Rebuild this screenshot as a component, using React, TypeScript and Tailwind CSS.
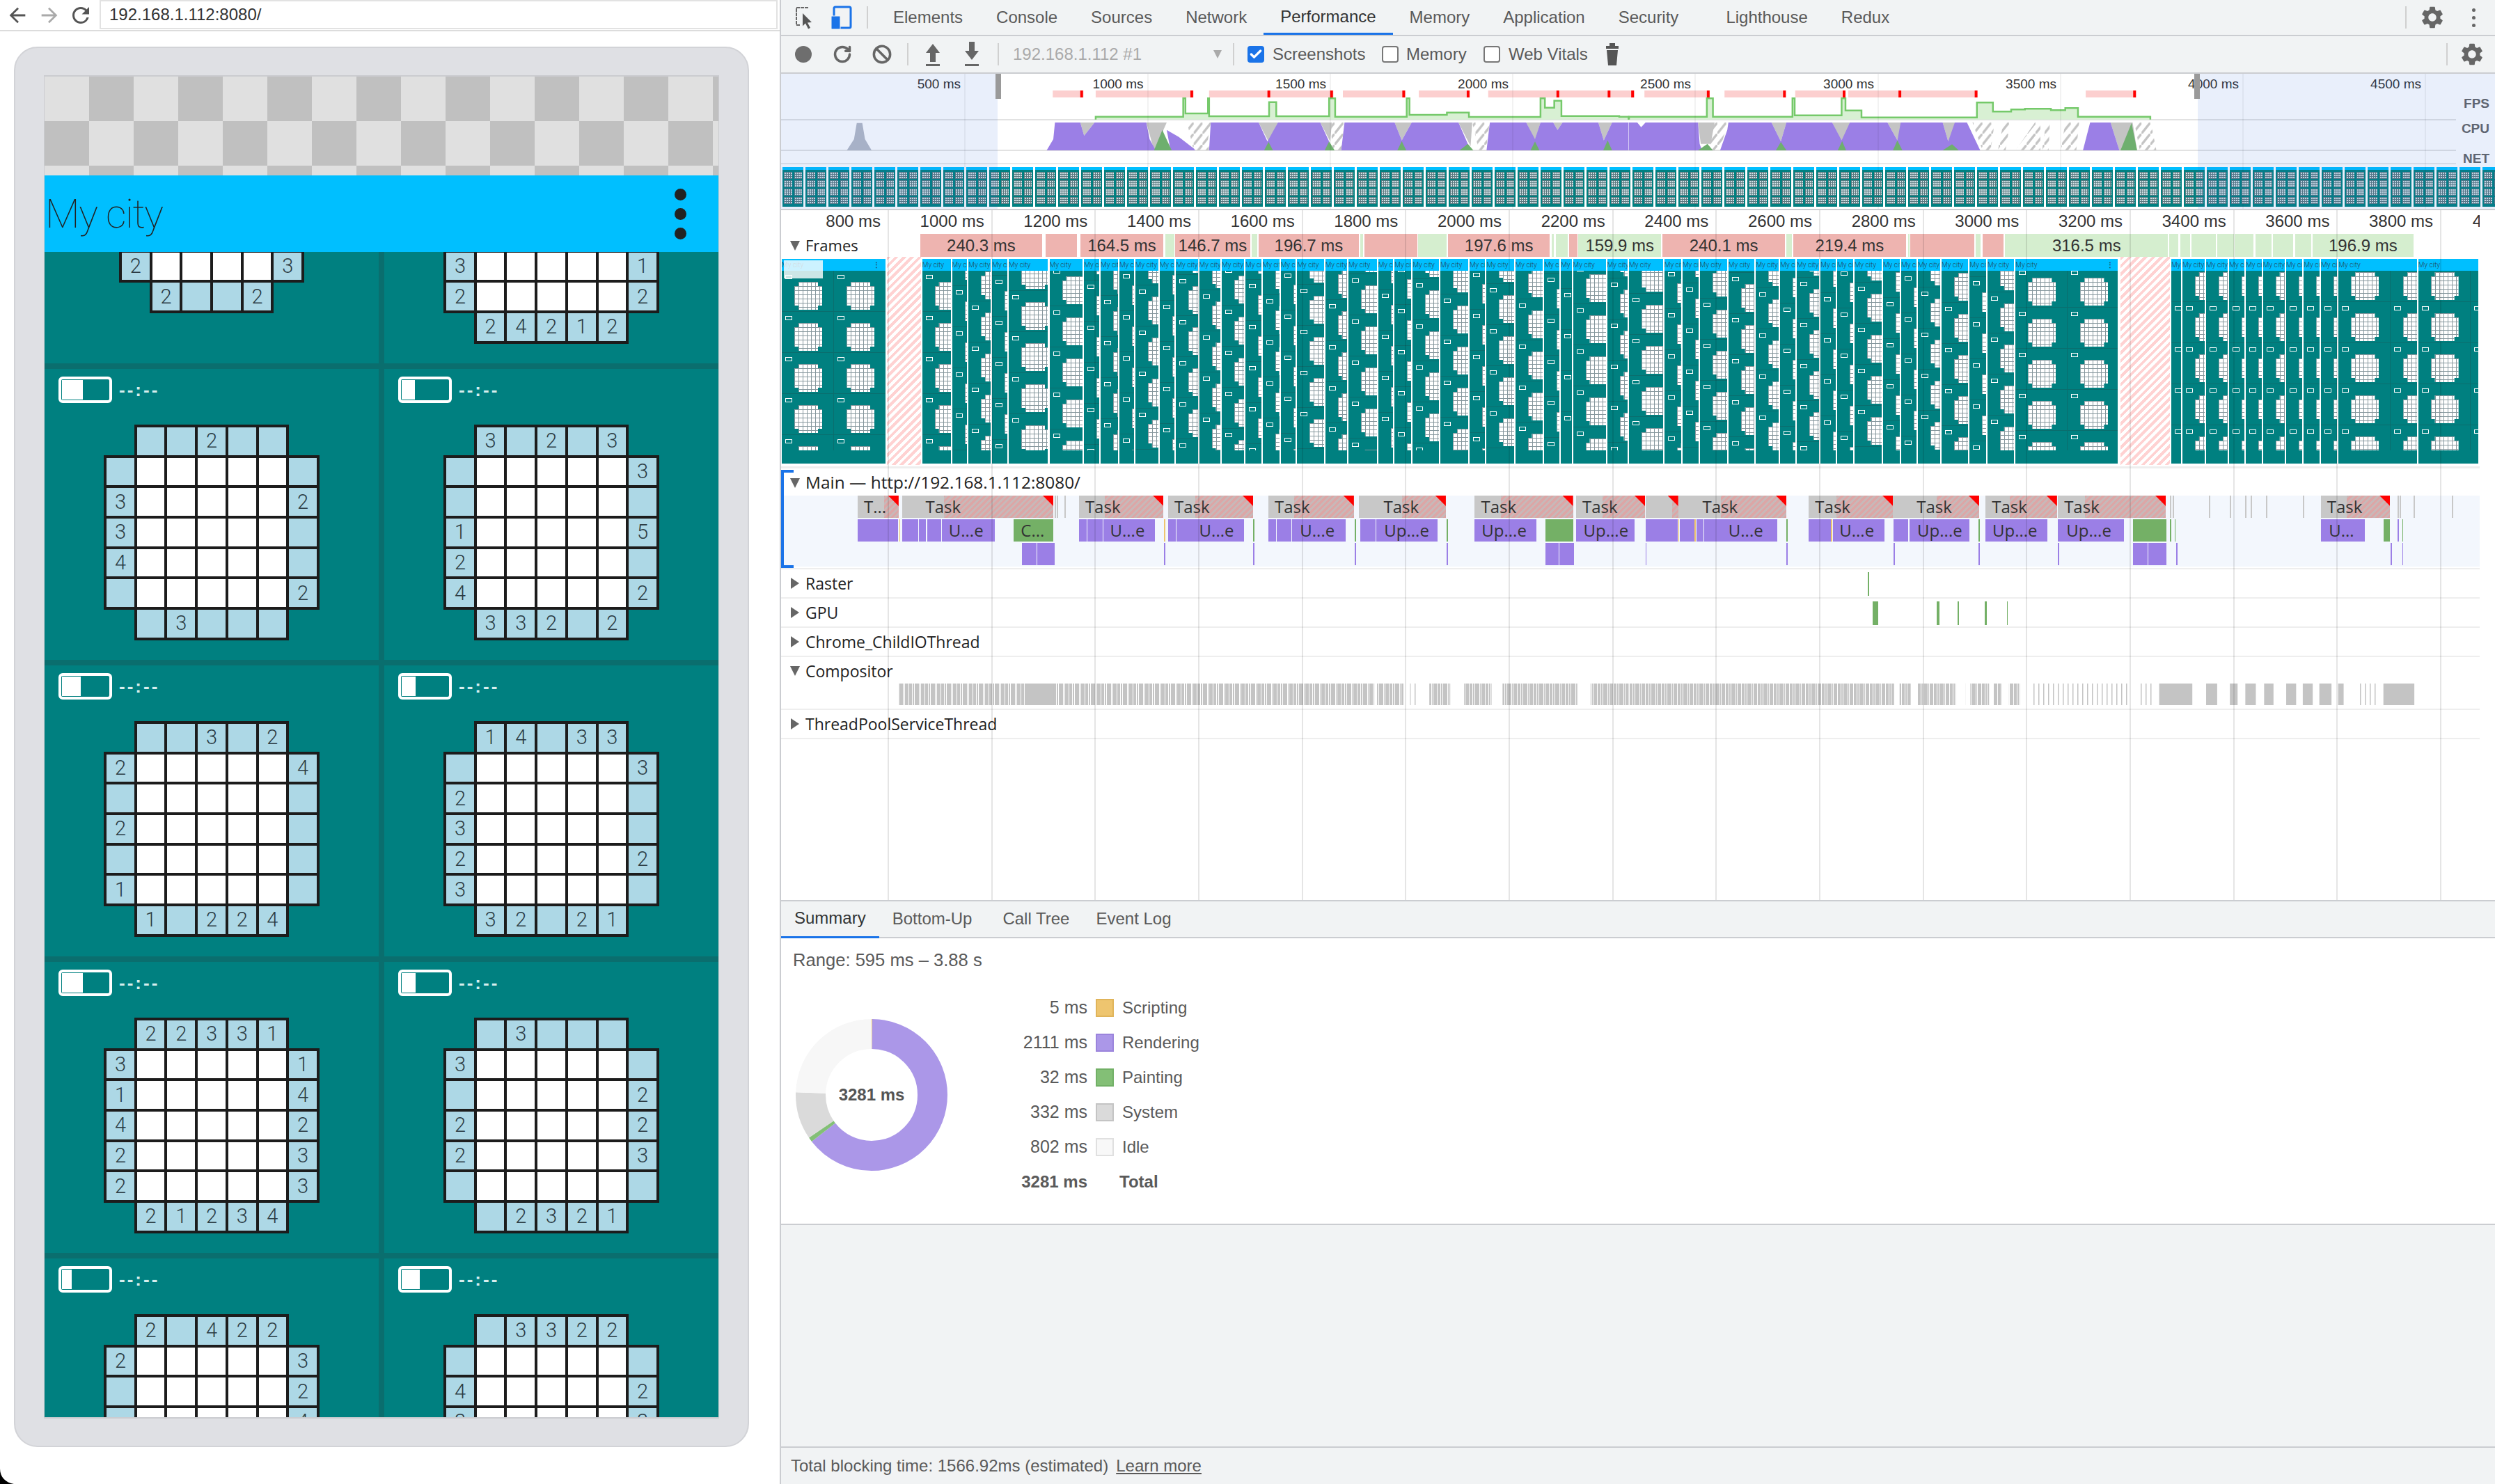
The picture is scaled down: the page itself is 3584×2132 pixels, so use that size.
import { Ban, Check, RotateCw } from "lucide-react"
import { MdArrowBack, MdArrowForward, MdRefresh, MdSettings } from "react-icons/md"

// zoomed coordinates of the timeline -> px from the left edge of the devtools pane
const a = (z: number) => z / 1.2645 - 2
const b = (z: number) => 1218 + z / 1.2605

/* ---------- puzzle board on the left ---------- */

const boards: { fill?: number; rows: string[] }[] = [
    { rows: [".1__2.", "_wwww_", "_wwww3", "1wwww_", "2wwww3", ".2__2."] },
    { rows: [".2___1.", "_wwwww_", "_wwwww2", "_wwwww1", "3wwwww1", "2wwwww2", ".24212."] },
    { fill: 30, rows: [".__2__.", "_wwwww_", "3wwwww2", "3wwwww_", "4wwwww_", "_wwwww2", "._3___."] },
    { fill: 19, rows: [".3_2_3.", "_wwwww3", "_wwwww_", "1wwwww5", "2wwwww_", "4wwwww2", ".332_2."] },
    { fill: 27, rows: [".__3_2.", "2wwwww4", "_wwwww_", "2wwwww_", "_wwwww_", "1wwwww_", ".1_224."] },
    { fill: 20, rows: [".14_33.", "_wwwww3", "2wwwww_", "3wwwww_", "2wwwww2", "3wwwww_", ".32_21."] },
    { fill: 30, rows: [".22331.", "3wwwww1", "1wwwww4", "4wwwww2", "2wwwww3", "2wwwww3", ".21234."] },
    { fill: 20, rows: ["._3___.", "3wwwww_", "_wwwww2", "2wwwww2", "2wwwww3", "_wwwww_", "._2321."] },
    { fill: 14, rows: [".2_422.", "2wwwww3", "_wwwww2", "_wwwww4", "_wwwww_", "_wwwww_", ".2_1_2."] },
    { fill: 26, rows: ["._3322.", "_wwwww_", "4wwwww2", "3wwwww3", "_wwwww_", "_wwwww_", "._12_2."] },
]

function Puzzle({ rows }: { rows: string[] }) {
    return (
        <div className={`mx-auto grid w-fit auto-rows-[43.7px] pb-1 pr-1 ${rows.length === 6 ? "grid-cols-[repeat(6,43.7px)]" : "grid-cols-[repeat(7,43.7px)]"}`}>
            {rows.join("").split("").map((c, i) =>
                c === "." ? (
                    <div key={i} />
                ) : (
                    <div
                        key={i}
                        className={`flex h-[47.7px] w-[47.7px] items-center justify-center border-4 border-[#1c1c1c] font-['Roboto',sans-serif] text-[29px] font-light leading-none text-[#2c3c44] ${c === "w" ? "bg-white" : "bg-[#add8e6]"}`}
                    >
                        {c !== "w" && c !== "_" ? c : ""}
                    </div>
                ),
            )}
        </div>
    )
}

function Card({ fill, rows }: { fill?: number; rows: string[] }) {
    return (
        <div className="h-[418px] bg-[#008080]">
            <div className="flex items-center pl-5 pt-[11px]">
                <div className="h-[38px] w-[77px] rounded-md border-4 border-white p-px">
                    <div className="h-full bg-white" style={{ width: fill ?? 20 }} />
                </div>
                <span className="ml-[10px] text-[26px] font-bold leading-none tracking-[3px] text-[#d7eeee]">--:--</span>
            </div>
            <div className="mt-[31px]">
                <Puzzle rows={rows} />
            </div>
        </div>
    )
}

function Phone() {
    return (
        <div className="relative h-[2132px] w-[1120px] shrink-0 bg-white">
            <div className="flex h-[45px] border-b-2 border-[#dcdcdc]">
                <div className="flex w-[143px] items-center pl-2">
                    <MdArrowBack size={34} className="text-[#555]" />
                    <MdArrowForward size={34} className="ml-[12px] text-[#aaa]" />
                    <MdRefresh size={36} className="ml-[10px] text-[#555]" />
                </div>
                <div className="flex h-[42px] w-[974px] items-center border-2 border-[#e2e2e2] pl-3 text-[24px] text-[#333]">192.168.1.112:8080/</div>
            </div>
            <div className="ml-5 mt-[22px] h-[2012px] w-[1056px] rounded-[34px] border-2 border-[#d2d3d7] bg-[#dfe0e4] pl-[41px] pt-[39px]">
                <div className="flex h-[1930px] w-[970px] flex-col border-x border-y-2 border-[#cbccd0]">
                    <div className="h-[142px] shrink-0 bg-[conic-gradient(#c0c0c0_25%,#e0e0e0_0_50%,#c0c0c0_0_75%,#e0e0e0_0)] [background-size:128px_128px]" />
                    <div className="flex h-[110px] shrink-0 items-center justify-between bg-[#00bfff] pl-px pr-[46px]">
                        <span className="font-['Roboto',sans-serif] text-[58px] font-thin leading-none tracking-tight text-[#222]">My city</span>
                        <div className="flex flex-col gap-[11px]">
                            <div className="h-[17px] w-[17px] rounded-full bg-[#222]" />
                            <div className="h-[17px] w-[17px] rounded-full bg-[#222]" />
                            <div className="h-[17px] w-[17px] rounded-full bg-[#222]" />
                        </div>
                    </div>
                    <div className="flex-1 overflow-hidden">
                        <div className="-mt-[258px] grid grid-cols-2 gap-2 bg-[#0a6e6e]">
                            {boards.map((c, i) => (
                                <Card key={i} fill={c.fill} rows={c.rows} />
                            ))}
                        </div>
                    </div>
                </div>
            </div>
            <svg width="20" height="22" className="absolute bottom-0 left-0">
                <path d="M0 0C0 12 8 20 20 22H0Z" fill="#000" />
            </svg>
        </div>
    )
}

/* ---------- small icons ---------- */

function Tri({ open }: { open?: boolean }) {
    return (
        <svg width="14" height="16" className="shrink-0">
            <polygon points={open ? "0,1 14,1 7,15" : "1,0 13,8 1,16"} fill="#666" />
        </svg>
    )
}

function Inspect() {
    return (
        <svg width="26" height="34" viewBox="0 0 26 34">
            <path d="M19 3H2v25h6" fill="none" stroke="#666" strokeWidth="2" strokeDasharray="5 1" />
            <path d="M11 11l13 13-6 .5 4 7.5-3 1.5-4-8-4 4z" fill="#555" />
        </svg>
    )
}

function Device() {
    return (
        <svg width="32" height="34" viewBox="0 0 32 34">
            <rect x="6" y="2" width="24" height="30" rx="2" fill="none" stroke="#1a73e8" strokeWidth="3" />
            <rect x="2" y="15" width="13" height="19" rx="1" fill="#1a73e8" stroke="#f1f3f4" strokeWidth="1" />
        </svg>
    )
}

function Arrow({ down }: { down?: boolean }) {
    return (
        <svg width="24" height="36" viewBox="0 0 24 36">
            <g transform={down ? "translate(0 -3)" : ""}>
                <path d={down ? "M8 3h8v13h6L12 29 2 16h6z" : "M12 3l10 13h-6v13H8V16H2z"} fill="#666" />
            </g>
            <rect x="2" y="32" width="20" height="3" fill="#666" />
        </svg>
    )
}

function Trash() {
    return (
        <svg width="30" height="36" viewBox="0 0 30 36">
            <rect x="6" y="6" width="18" height="4" fill="#555" />
            <rect x="11" y="2" width="8" height="4" fill="#555" />
            <path d="M7 12h16l-2 22H9z" fill="#555" />
        </svg>
    )
}

function Sep() {
    return <div className="h-8 w-0.5 bg-[#d0d0d0]" />
}

function CheckBox({ on }: { on?: boolean }) {
    return on ? (
        <div className="flex h-6 w-6 items-center justify-center rounded bg-[#1a73e8]">
            <Check size={20} strokeWidth={4} className="text-white" />
        </div>
    ) : (
        <div className="h-6 w-6 rounded border-2 border-[#777] bg-white" />
    )
}

/* ---------- devtools top bars ---------- */

const tabs = ["Elements", "Console", "Sources", "Network", "Performance", "Memory", "Application", "Security", "Lighthouse", "Redux"]

function TabBar() {
    return (
        <div className="flex h-[52px] items-center border-b-2 border-[#cbcdd1] bg-[#f1f3f4] text-[24px] text-[#5a5a5a]">
            <div className="ml-5">
                <Inspect />
            </div>
            <div className="ml-6">
                <Device />
            </div>
            <div className="ml-[21px]">
                <Sep />
            </div>
            <div className="ml-3 flex h-full">
                {tabs.map((t) => (
                    <div
                        key={t}
                        className={`flex h-[50px] items-center px-6 ${t === "Performance" ? "border-b-[3px] border-[#1a73e8] text-[#333]" : ""} ${t === "Security" ? "mr-5" : ""}`}
                    >
                        {t}
                    </div>
                ))}
            </div>
            <div className="ml-auto">
                <Sep />
            </div>
            <MdSettings size={38} className="ml-[18px] text-[#666]" />
            <div className="ml-[38px] mr-[28px] flex flex-col gap-[6px]">
                <div className="h-[5px] w-[5px] rounded-full bg-[#666]" />
                <div className="h-[5px] w-[5px] rounded-full bg-[#666]" />
                <div className="h-[5px] w-[5px] rounded-full bg-[#666]" />
            </div>
        </div>
    )
}

function Toolbar() {
    return (
        <div className="flex h-[54px] items-center border-b-2 border-[#cbcdd1] bg-[#f1f3f4] pl-5 pr-[14px] text-[24px] text-[#5a5a5a]">
            <div className="h-6 w-6 rounded-full bg-[#6e6e6e]" />
            <RotateCw size={28} strokeWidth={3} className="ml-[30px] text-[#666]" />
            <Ban size={28} strokeWidth={3} className="ml-[29px] text-[#666]" />
            <div className="ml-[22px]">
                <Sep />
            </div>
            <div className="ml-[23px]">
                <Arrow />
            </div>
            <div className="ml-8">
                <Arrow down />
            </div>
            <div className="ml-[25px]">
                <Sep />
            </div>
            <span className="ml-5 w-[288px] text-[#aaa]">192.168.1.112 #1</span>
            <svg width="12" height="12">
                <polygon points="0,0 12,0 6,12" fill="#aaa" />
            </svg>
            <div className="ml-4">
                <Sep />
            </div>
            <div className="ml-[19px]">
                <CheckBox on />
            </div>
            <span className="ml-3 w-[157px]">Screenshots</span>
            <CheckBox />
            <span className="ml-[11px] w-[111px]">Memory</span>
            <CheckBox />
            <span className="ml-3 w-[134px]">Web Vitals</span>
            <Trash />
            <div className="ml-auto">
                <Sep />
            </div>
            <MdSettings size={38} className="ml-4 text-[#666]" />
        </div>
    )
}

/* ---------- overview ---------- */

const ovTicks = [1385, 1647.5, 1910, 2172, 2434, 2697, 2959, 3221, 3483]

const fpsBarsA = [[496, 552, 548], [574, 752, 748], [780, 1006, 888, 1002], [1023, 1137, 1133], [1161, 1254, 1250], [1287, 1542, 1413, 1506]]
const fpsBarsB = [[-10, 10, 6], [28, 146, 143], [173, 284, 281], [301, 392, 389], [397, 631, 490, 628], [827, 918, 915]]

const fpsLineA = "574,515 574,503 733,503 733,424 737,424 737,489 778,489 778,424 780,424 780,501 889,501 889,440 902,440 902,501 998,501 998,424 1009,424 1009,503 1139,503 1139,424 1144,424 1144,495 1212,495 1212,485 1252,485 1252,504 1382,504 1382,424 1390,424 1390,464 1407,464 1407,434 1420,434 1420,500 1525,500 1525,503 1542,503 1542,515"
const fpsLineB = "0,515 0,503 141,503 141,424 152,424 152,503 296,503 296,424 300,424 300,497 385,497 385,424 392,424 392,476 421,476 421,506 630,506 630,442 659,442 659,481 692,481 692,472 717,472 717,469 764,469 764,475 790,475 790,466 813,466 813,503 944,503 944,515"

const cpuA: [string, string][] = [
    ["#c4c4c4", "546,528 572,528 553,585"],
    ["#c4c4c4", "666,528 703,528 697,560 690,648 680,648"],
    ["url(#hatch)", "740,528 783,528 778,600 780,648 752,648"],
    ["url(#hatch)", "1000,528 1028,528 1022,600 1020,648 1005,648"],
    ["url(#hatch)", "1258,528 1290,528 1285,600 1285,648 1270,648"],
    ["#9b7fe6", "485,648 497,600 500,528 546,528 553,585 572,528 666,528 672,600 683,648"],
    ["#9b7fe6", "703,560 725,590 752,640 755,648 710,648"],
    ["#c4c4c4", "870,528 905,528 888,610"],
    ["#c4c4c4", "982,528 1003,528 1000,610"],
    ["#c4c4c4", "1117,528 1148,528 1130,605"],
    ["#c4c4c4", "1233,528 1258,528 1255,630"],
    ["#c4c4c4", "1356,528 1382,528 1372,605"],
    ["#c4c4c4", "1405,528 1422,528 1413,560"],
    ["#c4c4c4", "1487,528 1512,528 1497,605"],
    ["#9b7fe6", "783,528 870,528 886,610 893,580 905,528 982,528 998,610 1003,648 780,648"],
    ["#9b7fe6", "1026,528 1117,528 1130,605 1148,528 1233,528 1250,620 1258,648 1020,648"],
    ["#9b7fe6", "1284,648 1290,528 1356,528 1372,600 1382,528 1405,528 1413,560 1422,528 1487,528 1497,605 1512,528 1542,528 1542,648"],
    ["#6eaf6e", "680,648 695,560 712,648"],
    ["#6eaf6e", "880,648 888,612 896,648"],
    ["#6eaf6e", "990,648 998,610 1008,648"],
    ["#6eaf6e", "1122,648 1130,608 1138,648"],
    ["#6eaf6e", "1235,648 1250,620 1260,648"],
    ["#6eaf6e", "1364,648 1372,610 1380,648"],
    ["#6eaf6e", "1496,648 1504,605 1512,648"],
    ["#b6bac6", "122,648 135,600 140,530 150,530 155,600 167,648"],
]

const cpuB: [string, string][] = [
    ["#c4c4c4", "125,528 155,528 148,620 130,620"],
    ["url(#hatch)", "137,528 180,528 170,600 165,648 150,648"],
    ["url(#hatch)", "622,528 662,528 655,648 640,648"],
    ["url(#hatch)", "678,528 690,528 682,648 668,648"],
    ["url(#hatch)", "735,528 745,528 745,648 700,648"],
    ["url(#hatch)", "755,528 762,528 760,648 748,648"],
    ["url(#hatch)", "790,528 815,528 810,648 782,648"],
    ["url(#hatch)", "915,528 945,528 955,648 925,648"],
    ["#c4c4c4", "258,528 285,528 275,610"],
    ["#c4c4c4", "368,528 403,528 392,600 385,610"],
    ["#c4c4c4", "468,528 495,528 486,605"],
    ["#c4c4c4", "568,528 595,528 578,610"],
    ["#c4c4c4", "872,528 912,528 920,648 888,648"],
    ["#9b7fe6", "0,648 0,528 15,528 22,548 30,528 125,528 128,620 132,648"],
    ["#9b7fe6", "165,648 178,560 180,528 258,528 275,610 285,528 368,528 385,605 400,528 468,528 486,605 492,528 568,528 578,610 590,528 612,528 636,648"],
    ["#9b7fe6", "822,648 835,528 872,528 888,648"],
    ["#6eaf6e", "125,648 142,620 152,648"],
    ["#6eaf6e", "266,648 275,612 285,648"],
    ["#6eaf6e", "378,648 386,608 393,648"],
    ["#6eaf6e", "478,648 486,605 495,648"],
    ["#6eaf6e", "568,648 585,622 597,648"],
    ["#6eaf6e", "890,648 910,530 920,648"],
]

function FpsBars({ list }: { list: number[][] }) {
    return (
        <>
            {list.map((bar, i) => (
                <g key={i}>
                    <rect x={bar[0]} y={390} width={bar[1] - bar[0]} height={30} fill="#fccfcf" />
                    {bar.slice(2).map((r) => (
                        <rect key={r} x={r - 2} y={390} width={5} height={30} fill="#f00" />
                    ))}
                </g>
            ))}
        </>
    )
}

function CpuShapes({ line, list }: { line: string; list: [string, string][] }) {
    return (
        <>
            {list.map(([fill, pts], i) => (
                <polygon key={i} points={pts} fill={fill} />
            ))}
            <polygon points={line} fill="#d8f0d3" />
            <polyline points={line} fill="none" stroke="#75c96a" strokeWidth="2.5" vectorEffect="non-scaling-stroke" />
        </>
    )
}

function StripFrame() {
    return (
        <div className="h-[57px] w-[30px] shrink-0 bg-[#008080]">
            <div className="h-1 bg-[#00bfff]" />
            <div className="grid grid-cols-2 gap-x-[3px] gap-y-[2px] px-[2px] pt-[3px]">
                {[0, 1, 2, 3, 4, 5, 6, 7].map((i) => (
                    <div key={i} className="h-[10px] bg-[#cfe0e4] bg-[linear-gradient(#5d7a80_1px,transparent_1px),linear-gradient(90deg,#5d7a80_1px,transparent_1px)] [background-size:3px_3px]" />
                ))}
            </div>
        </div>
    )
}

function Overview() {
    return (
        <div className="relative h-[196px] overflow-hidden border-b-2 border-[#cbcdd1] bg-white">
            <div className="relative h-[134px]">
                <svg width="2462" height="134" className="absolute left-0 top-0">
                    <defs>
                        <pattern id="hatch" width="16" height="48" patternUnits="userSpaceOnUse">
                            <line x1="0" y1="48" x2="16" y2="0" stroke="#c4c4c4" strokeWidth="5" vectorEffect="non-scaling-stroke" />
                        </pattern>
                    </defs>
                    <rect x="0" y="65" width="2406" height="2" fill="#e2e2e2" />
                    <rect x="0" y="109" width="2406" height="2" fill="#e2e2e2" />
                    <rect x="0" y="128" width="2406" height="2" fill="#e8e8e8" />
                    <g transform="translate(-2 -106) scale(0.7908 0.33333)">
                        <FpsBars list={fpsBarsA} />
                        <CpuShapes line={fpsLineA} list={cpuA} />
                    </g>
                    <g transform="translate(1218 -106) scale(0.7933 0.33333)">
                        <FpsBars list={fpsBarsB} />
                        <CpuShapes line={fpsLineB} list={cpuB} />
                    </g>
                </svg>
                {ovTicks.map((x, i) => (
                    <span key={x} className="absolute top-[3px] text-[19px] leading-6 text-[#333]" style={{ right: 2462 - (x - 1122) + 5 }}>
                        {500 + i * 500} ms
                    </span>
                ))}
                <span className="absolute right-2 top-[31px] text-[19px] font-bold leading-6 text-[#666]">FPS</span>
                <span className="absolute right-2 top-[67px] text-[19px] font-bold leading-6 text-[#666]">CPU</span>
                <span className="absolute right-2 top-[110px] text-[19px] font-bold leading-6 text-[#666]">NET</span>
            </div>
            <div className="flex gap-[3px] pl-[2px]">
                {Array.from({ length: 75 }, (_, i) => (
                    <StripFrame key={i} />
                ))}
            </div>
            {ovTicks.map((x) => (
                <div key={x} className="absolute inset-y-0 w-0.5 bg-black/5" style={{ left: x - 1122 }} />
            ))}
            <div className="absolute inset-y-0 left-0 w-[311px] bg-[#2a5fd8]/10" />
            <div className="absolute inset-y-0 left-[2035px] right-0 bg-[#2a5fd8]/10" />
            <div className="absolute left-[308px] top-0 h-9 w-2 bg-[#9a9a9a]" />
            <div className="absolute left-[2030px] top-0 h-9 w-2 bg-[#9a9a9a]" />
        </div>
    )
}

/* ---------- main timeline ---------- */

type Frame = [number, number, "p" | "g", string?]

const frameBars: Frame[] = [
    [a(255), a(477), "p", "240.3 ms"], [a(483), a(540), "p"], [a(546), a(697), "p", "164.5 ms"], [a(701), a(717), "g"],
    [a(718), a(855), "p", "146.7 ms"], [a(857), a(868), "g"], [a(870), a(1052), "p", "196.7 ms"], [a(1054), a(1060), "g"],
    [a(1062), a(1158), "p"], [a(1160), a(1211), "g"], [a(1214), a(1399), "p", "197.6 ms"], [a(1402), a(1406), "g"],
    [a(1410), a(1431), "g"], [a(1434), a(1449), "p"], [a(1451), b(58), "g", "159.9 ms"],
    [b(61), b(282), "p", "240.1 ms"], [b(285), b(295), "g"], [b(297), b(502), "p", "219.4 ms"], [b(505), b(508), "g"],
    [b(509), b(625), "p"], [b(628), b(637), "g"], [b(640), b(678), "p"], [b(681), b(976), "g", "316.5 ms"],
    [b(978), b(995), "g"], [b(998), b(1016), "g"], [b(1018), b(1062), "g"], [b(1065), b(1095), "g"], [b(1097), b(1131), "g"],
    [b(1134), b(1163), "g"], [b(1166), b(1203), "g"], [b(1206), b(1235), "g"], [b(1238), b(1420), "g", "196.9 ms"],
]

const shotEdges = [
    ...[259, 313, 343, 386, 416, 490, 553, 583, 617, 646, 690, 720, 762, 803, 846, 877, 910, 940, 991, 1033, 1087, 1117, 1150, 1200, 1253, 1284, 1336, 1389, 1419, 1441, 1503].map(a),
    ...[0, 64, 97, 128, 180, 230, 274, 304, 347, 377, 408, 460, 493, 523, 566, 617, 649, 700, 888].map(b),
]
const shotEdges2 = [982, 1002, 1045, 1087, 1117, 1148, 1190, 1222, 1253, 1285, 1429, 1540].map(b)

function MiniCard() {
    return (
        <div className="h-[59px] w-[75px] border-b border-r border-[#0a6e6e] pl-[5px] pt-[6px]">
            <div className="h-[6px] w-[10px] border border-white" />
            <div className="ml-[13px] mt-[4px] h-[40px] w-[40px] bg-white bg-[linear-gradient(#86979d_1px,transparent_1px),linear-gradient(90deg,#86979d_1px,transparent_1px)] [background-size:6px_6px] [clip-path:polygon(15%_0,85%_0,85%_15%,100%_15%,100%_85%,85%_85%,85%_100%,15%_100%,15%_85%,0_85%,0_15%,15%_15%)]" />
        </div>
    )
}

function Shot({ left, width, scroll }: { left: number; width: number; scroll: number }) {
    const double = width >= 75
    return (
        <div className="absolute bottom-[2px] top-[3px] overflow-hidden bg-[#008080]" style={{ left, width }}>
            <div className="flex h-[17px] w-[149px] items-center justify-between bg-[#00bfff] pr-2 font-['Roboto',sans-serif] text-[10px] font-light text-[#245]">
                <span>My city</span>
                {width > 140 && <span className="font-bold">⋮</span>}
            </div>
            <div className="h-[258px] w-[150px] overflow-hidden">
                <div className="flex flex-wrap" style={{ marginTop: -scroll }}>
                    {Array.from({ length: double ? 12 : 7 }, (_, i) => (
                        <div key={i} className={double ? "" : "w-[150px]"}>
                            <MiniCard />
                        </div>
                    ))}
                </div>
            </div>
        </div>
    )
}

function Shots() {
    return (
        <div className="relative h-[299px] bg-white">
            <Shot left={1} width={149} scroll={0} />
            <div className="absolute left-[4px] top-[5px] h-[26px] w-[56px] bg-white/80" />
            <div className="absolute inset-y-0 left-[152px] w-[49px] bg-[repeating-linear-gradient(135deg,#ffd2d2_0_4px,#fff_4px_8px)]" />
            <div className="absolute inset-y-0 w-[71px] bg-[repeating-linear-gradient(135deg,#ffd2d2_0_4px,#fff_4px_8px)]" style={{ left: b(890) }} />
            {shotEdges.slice(0, -1).map((x, i) => (
                <Shot key={i} left={x} width={shotEdges[i + 1] - x - 2} scroll={(i * 37) % 59} />
            ))}
            {shotEdges2.slice(0, -1).map((x, i) => (
                <Shot key={i} left={x} width={shotEdges2[i + 1] - x - 2} scroll={14} />
            ))}
        </div>
    )
}

// start, end, where the long-task hatching begins, where the label starts
const tasks: [number, number, number, number | null, string?][] = [
    [a(142), a(216), a(190), a(153), "T..."], [a(222), a(497), a(298), a(265), "Task"], [a(544), a(697), a(590), a(555), "Task"],
    [a(706), a(860), a(755), a(717), "Task"], [a(888), a(1043), a(935), a(899), "Task"], [a(1052), a(1210), a(1130), a(1097), "Task"],
    [a(1262), a(1441), a(1310), a(1274), "Task"], [a(1447), b(29), a(1495), a(1458), "Task"], [b(30), b(89), b(78), null],
    [b(90), b(285), b(167), b(133), "Task"], [b(325), b(478), b(375), b(337), "Task"], [b(478), b(634), b(557), b(521), "Task"],
    [b(645), b(775), b(690), b(657), "Task"], [b(776), b(972), b(825), b(788), "Task"], [b(1253), b(1378), b(1300), b(1264), "Task"],
]

const taskSlivers = [a(500), a(503), a(517), b(980), b(984), b(1050), b(1088), b(1115), b(1125), b(1153), b(1220), b(1392), b(1396), b(1420), b(1490)]

// start, end, colour, optional label and its x
type Block = [number, number, string, string?, number?]
const P = "bg-[#9b7fe6]"
const G = "bg-[#74b066]"
const Y = "bg-[#eec56f]"

const updates: Block[] = [
    [a(142), a(179), P], [a(180), a(215), P], [a(217), a(219), Y], [a(223), a(252), P], [a(253), a(265), P], [a(268), a(293), P], [a(294), a(391), P, "U...e", a(307)],
    [a(425), a(497), G, "C...", a(438)],
    [a(544), a(558), P], [a(559), a(587), P], [a(588), a(682), P, "U...e", a(600)], [a(698), a(700), Y],
    [a(706), a(720), P], [a(721), a(748), P], [a(749), a(843), P, "U...e", a(762)], [a(860), a(862), G],
    [a(888), a(902), P], [a(903), a(930), P], [a(931), a(1028), P, "U...e", a(945)], [a(1045), a(1047), G],
    [a(1055), a(1082), P], [a(1084), a(1195), P, "Up...e", a(1098)], [a(1212), a(1214), G],
    [a(1262), a(1375), P, "Up...e", a(1275)], [a(1391), a(1441), G], [a(1447), a(1553), P, "Up...e", a(1460)],
    [b(30), b(60), P], [b(61), b(88), P], [b(89), b(91), Y], [b(92), b(118), P], [b(119), b(121), Y], [b(122), b(135), P], [b(136), b(268), P, "U...e", b(180)], [b(285), b(287), G],
    [b(325), b(365), P], [b(366), b(368), Y], [b(369), b(463), P, "U...e", b(381)],
    [b(479), b(506), P], [b(508), b(617), P, "Up...e", b(522)], [b(633), b(635), G],
    [b(645), b(758), P, "Up...e", b(658)], [b(777), b(896), P, "Up...e", b(792)], [b(913), b(973), G], [b(980), b(982), G], [b(988), b(990), G],
    [b(1253), b(1332), P, "U...", b(1267)], [b(1366), b(1378), G], [b(1392), b(1394), P], [b(1400), b(1402), G],
]

const subUpdates: Block[] = [
    [a(440), a(467), P], [a(468), a(499), P], [a(698), a(700), P], [a(860), a(862), P], [a(1045), a(1047), P], [a(1212), a(1214), P],
    [a(1391), a(1415), P], [a(1416), a(1443), P], [b(30), b(32), P], [b(285), b(287), P], [b(479), b(481), P], [b(633), b(635), P],
    [b(777), b(779), P], [b(913), b(939), P], [b(940), b(973), P], [b(991), b(993), P], [b(1379), b(1381), P], [b(1400), b(1402), P],
]

function BlockRow({ list, top }: { list: Block[]; top: string }) {
    return (
        <>
            {list.map(([x0, x1, color, label, lx], i) => (
                <div key={i} className={`absolute h-8 ${top} ${color} overflow-hidden text-[24px] leading-8 text-[#333]`} style={{ left: x0, width: x1 - x0 }}>
                    {label && (
                        <span className="absolute top-0" style={{ left: (lx ?? x0) - x0 }}>
                            {label}
                        </span>
                    )}
                </div>
            ))}
        </>
    )
}

function Main() {
    return (
        <div className="relative h-[143px] border-b-2 border-[#eee] font-['Open_Sans',sans-serif]">
            <div className="flex h-[37px] items-center gap-2 pl-[13px] text-[24.4px] text-[#222]">
                <Tri open />
                <span>Main — http://192.168.1.112:8080/</span>
            </div>
            <div className="relative h-[102px] bg-[#f3f7fd]">
                {tasks.map(([x0, x1, h, lx, label], i) => (
                    <div key={i} className="absolute top-0 h-8 overflow-hidden bg-[#c8c8c8] text-[24px] leading-8 text-[#333]" style={{ left: x0, width: x1 - x0 }}>
                        <div className="absolute inset-y-0 right-0 bg-[repeating-linear-gradient(-45deg,#dca6a6_0_3px,#c8b8b8_3px_6px)]" style={{ width: x1 - h }} />
                        {label && lx !== null && (
                            <span className="absolute top-0" style={{ left: lx - x0 }}>
                                {label}
                            </span>
                        )}
                        <div className="absolute right-0 top-0 h-[15px] w-[15px] bg-[#f00] [clip-path:polygon(0_0,100%_0,100%_100%)]" />
                    </div>
                ))}
                {taskSlivers.map((x) => (
                    <div key={x} className="absolute top-0 h-8 w-0.5 bg-[#c8c8c8]" style={{ left: x }} />
                ))}
                <BlockRow list={updates} top="top-[34px]" />
                <BlockRow list={subUpdates} top="top-[68px]" />
            </div>
            <div className="absolute bottom-0 left-0 top-0 w-1 bg-[#1a73e8]" />
            <div className="absolute left-0 top-0 h-1 w-[18px] bg-[#1a73e8]" />
            <div className="absolute bottom-0 left-0 h-1 w-[18px] bg-[#1a73e8]" />
        </div>
    )
}

function Track({ name, open, tall, children }: { name: string; open?: boolean; tall?: boolean; children?: React.ReactNode }) {
    return (
        <div className={`relative border-b-2 border-[#eee] ${tall ? "h-[76px]" : "h-[42px]"}`}>
            <div className="flex h-10 items-center gap-2 pl-[13px] font-['Open_Sans',sans-serif] text-[23px] text-[#222]">
                <Tri open={open} />
                <span>{name}</span>
            </div>
            {children}
        </div>
    )
}

const compDense: [number, number][] = [
    [a(217), a(1080)], [a(1085), a(1133)], [a(1180), a(1218)], [a(1243), a(1293)], [a(1313), a(1450)], [a(1473), a(1542)],
    [b(0), b(480)], [b(490), b(510)], [b(522), b(592)], [b(618), b(652)], [b(660), b(675)], [b(688), b(708)],
]
const compSparse: [number, number][] = [[a(140), a(143)], [a(1145), a(1158)], [b(727), b(905)], [b(925), b(950)], [b(1318), b(1358)], [b(1488), b(1491)], [b(607), b(609)]]
const compSolid: [number, number][] = [[a(445), a(498)], [b(960), b(1020)], [b(1045), b(1065)], [b(1088), b(1102)], [b(1116), b(1135)], [b(1150), b(1167)], [b(1190), b(1208)], [b(1220), b(1238)], [b(1250), b(1272)], [b(1284), b(1294)], [b(1366), b(1422)]]

function CompositorBars() {
    return (
        <svg width="2440" height="31" className="absolute left-0 top-[38px]">
            <defs>
                <pattern id="dense" width="23" height="31" patternUnits="userSpaceOnUse">
                    <rect width="4" height="31" fill="#c4c4c4" />
                    <rect x="5" width="2" height="31" fill="#c4c4c4" />
                    <rect x="8" width="6" height="31" fill="#c4c4c4" />
                    <rect x="15" width="1" height="31" fill="#c4c4c4" />
                    <rect x="17" width="5" height="31" fill="#c4c4c4" />
                </pattern>
                <pattern id="sparse" width="7" height="31" patternUnits="userSpaceOnUse">
                    <rect width="1.5" height="31" fill="#c4c4c4" />
                </pattern>
            </defs>
            {compDense.map(([x0, x1]) => <rect key={x0} x={x0} width={x1 - x0} height="31" fill="url(#dense)" />)}
            {compSparse.map(([x0, x1]) => <rect key={x0} x={x0} width={x1 - x0} height="31" fill="url(#sparse)" />)}
            {compSolid.map(([x0, x1]) => <rect key={x0} x={x0} width={x1 - x0} height="31" fill="#c4c4c4" />)}
        </svg>
    )
}

const rulerTicks = Array.from({ length: 16 }, (_, i) => 1275 + i * 148.67 - 1122)

function Timeline() {
    return (
        <div className="relative h-[991px] w-[2440px] overflow-hidden bg-white text-[24px]">
            <div className="relative h-[34px]">
                {[...rulerTicks, 1275 + 16 * 148.67 - 1122].map((x, i) => (
                    <span key={i} className="absolute top-0 leading-[32px] text-[#333]" style={{ right: 2440 - x + 10 }}>
                        {800 + i * 200} ms
                    </span>
                ))}
            </div>
            <div className="relative h-[33px]">
                <div className="flex h-full w-[153px] items-center gap-2 bg-white pl-[13px] font-['Open_Sans',sans-serif] text-[22px] text-[#222]">
                    <Tri open />
                    <span>Frames</span>
                </div>
                {frameBars.map(([x0, x1, kind, label]) => (
                    <div
                        key={x0}
                        className={`absolute top-0 h-full text-center leading-[33px] text-[#333] ${kind === "p" ? "bg-[#eeb4b0]" : "bg-[#d5eecf]"}`}
                        style={{ left: x0, width: x1 - x0 }}
                    >
                        {label}
                    </div>
                ))}
            </div>
            <Shots />
            <div className="h-[7px] pt-[2px]">
                <div className="h-[3px] bg-[#eee]" />
            </div>
            <Main />
            <Track name="Raster">
                <div className="absolute top-1 h-[34px] w-0.5 bg-[#74b066]" style={{ left: b(432) }} />
            </Track>
            <Track name="GPU">
                {[[441, 451], [557, 562], [595, 597], [644, 648], [684, 686]].map(([x0, x1]) => (
                    <div key={x0} className="absolute top-1 h-[34px] bg-[#74b066]" style={{ left: b(x0), width: (x1 - x0) / 1.26 }} />
                ))}
            </Track>
            <Track name="Chrome_ChildIOThread" />
            <Track name="Compositor" open tall>
                <CompositorBars />
            </Track>
            <Track name="ThreadPoolServiceThread" />
            {rulerTicks.map((x) => (
                <div key={x} className="absolute inset-y-0 w-0.5 bg-black/10" style={{ left: x }} />
            ))}
        </div>
    )
}

/* ---------- summary ---------- */

const legend = [
    { value: "5 ms", label: "Scripting", fill: "bg-[#eec56f]", line: "border-[#e0b45a]" },
    { value: "2111 ms", label: "Rendering", fill: "bg-[#ab97e8]", line: "border-[#9b84dc]" },
    { value: "32 ms", label: "Painting", fill: "bg-[#83bf76]", line: "border-[#72b066]" },
    { value: "332 ms", label: "System", fill: "bg-[#dadada]", line: "border-[#c4c4c4]" },
    { value: "802 ms", label: "Idle", fill: "bg-[#f8f8f8]", line: "border-[#e0e0e0]" },
]

const slices: [number, string][] = [
    [5, "#eec56f"],
    [2111, "#ab97e8"],
    [32, "#83bf76"],
    [332, "#dadada"],
    [802, "#f7f7f7"],
]

function Donut() {
    let offset = 0
    return (
        <div className="relative ml-[21px] mt-[41px] h-[218px] w-[218px] shrink-0">
            <svg width="218" height="218" viewBox="0 0 218 218" className="-rotate-90">
                {slices.map(([v, color]) => {
                    const dash = -offset
                    offset += v
                    return <circle key={color} cx="109" cy="109" r="87.5" fill="none" stroke={color} strokeWidth="43" pathLength={3282} strokeDasharray={`${v} ${3282 - v}`} strokeDashoffset={dash} />
                })}
            </svg>
            <div className="absolute inset-0 flex items-center justify-center text-[24px] font-bold text-[#555]">3281 ms</div>
        </div>
    )
}

function Summary() {
    return (
        <div className="flex flex-1 flex-col text-[24px] text-[#5a5a5a]">
            <div className="flex h-[55px] border-y-2 border-[#cbcdd1] bg-[#f1f3f4]">
                {["Summary", "Bottom-Up", "Call Tree", "Event Log"].map((t, i) => (
                    <div key={t} className={`flex h-[53px] items-center pb-[3px] pl-[19px] ${i === 1 ? "pr-[25px]" : "pr-[19px]"} ${i === 0 ? "border-b-[3px] border-[#1a73e8] text-[#333]" : ""}`}>
                        {t}
                    </div>
                ))}
            </div>
            <div className="h-[410px] bg-white">
                <div className="pl-[17px] pt-[17px] text-[25.6px] leading-7">Range: 595 ms – 3.88 s</div>
                <div className="mt-[30px] flex">
                    <Donut />
                    <div className="flex flex-col">
                        {legend.map((row) => (
                            <div key={row.label} className="flex h-[50px] items-center">
                                <span className="w-[201px] text-right text-[25px]">{row.value}</span>
                                <div className={`ml-3 h-[26px] w-[26px] border-2 ${row.fill} ${row.line}`} />
                                <span className="ml-3">{row.label}</span>
                            </div>
                        ))}
                        <div className="flex h-[50px] items-center font-bold">
                            <span className="w-[201px] text-right">3281 ms</span>
                            <span className="ml-[46px]">Total</span>
                        </div>
                    </div>
                </div>
            </div>
            <div className="flex-1 border-t-2 border-[#cbcdd1] bg-[#f1f3f4]" />
            <div className="flex h-[54px] items-center border-t-2 border-[#cbcdd1] bg-[#f1f3f4] pl-[14px]">
                <span>Total blocking time: 1566.92ms (estimated)</span>
                <span className="ml-[11px] underline">Learn more</span>
            </div>
        </div>
    )
}

export default function App() {
    return (
        <div className="flex h-[2132px] w-[3584px] overflow-hidden bg-white font-['Liberation_Sans',Arial,sans-serif]">
            <Phone />
            <div className="flex h-full w-[2464px] shrink-0 flex-col border-l-2 border-[#cbcdd1]">
                <TabBar />
                <Toolbar />
                <Overview />
                <Timeline />
                <Summary />
            </div>
        </div>
    )
}
